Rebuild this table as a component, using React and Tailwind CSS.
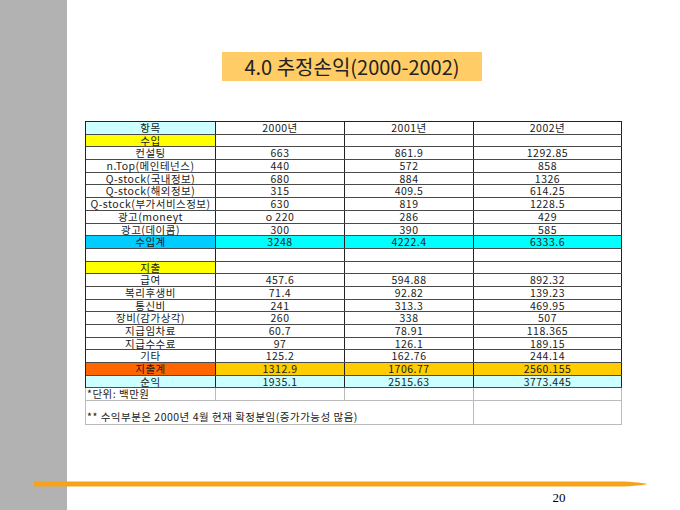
import React from 'react';

const income = [
  ['컨설팅', '663', '861.9', '1292.85'],
  ['n.Top(메인테넌스)', '440', '572', '858'],
  ['Q-stock(국내정보)', '680', '884', '1326'],
  ['Q-stock(해외정보)', '315', '409.5', '614.25'],
  ['Q-stock(부가서비스정보)', '630', '819', '1228.5'],
  ['광고(moneyt', 'o 220', '286', '429'],
  ['광고(데이콤)', '300', '390', '585'],
];

const expense = [
  ['급여', '457.6', '594.88', '892.32'],
  ['복리후생비', '71.4', '92.82', '139.23'],
  ['통신비', '241', '313.3', '469.95'],
  ['장비(감가상각)', '260', '338', '507'],
  ['지급임차료', '60.7', '78.91', '118.365'],
  ['지급수수료', '97', '126.1', '189.15'],
  ['기타', '125.2', '162.76', '244.14'],
];

// 한 줄 = 4칸
const Row = ({ cells, first = 'bg-white', rest = 'bg-white' }) => (
  <div className="grid grid-cols-[130px_129px_129px_148px] grid-rows-[11.7px] h-[12.7px] border-b border-[#4a4a4a]">
    {cells.map((t, i) => (
      <div
        key={i}
        className={`flex items-center justify-center border-r border-[#222] leading-[11.7px] whitespace-nowrap ${i === 0 ? first : rest}`}
      >
        {t}
      </div>
    ))}
  </div>
);

const App = () => {
  return (
    <div
      className="relative flex w-[680px] h-[510px] bg-white overflow-hidden text-[#1a1a1a]"
      style={{ fontFamily: '"Noto Sans CJK KR", "Noto Sans", sans-serif' }}
    >
      {/* 왼쪽 회색 바 */}
      <div className="w-[67px] shrink-0 bg-[#b2b2b2]" />

      <div className="flex-1 flex flex-col">
        {/* 제목 */}
        <div className="mt-[52px] ml-[155px] w-[260px] h-[29px] bg-[#ffcc66] flex items-center justify-center text-[20px] leading-none text-[#222]">
          4.0 추정손익(2000-2002)
        </div>

        {/* 표 */}
        <div className="mt-[40px] ml-[18px] w-[537px] border-l border-t border-[#222] text-[10.5px] tracking-[0.5px]">
          <Row cells={['항목', '2000년', '2001년', '2002년']} first="bg-[#ccffff]" />
          <Row cells={['수입', '', '', '']} first="bg-[#ffff00]" />
          {income.map((r) => (
            <Row key={r[0]} cells={r} />
          ))}
          <Row cells={['수입계', '3248', '4222.4', '6333.6']} first="bg-[#00ccff]" rest="bg-[#00ffff]" />
          <Row cells={['', '', '', '']} />
          <Row cells={['지출', '', '', '']} first="bg-[#ffff00]" />
          {expense.map((r) => (
            <Row key={r[0]} cells={r} />
          ))}
          <Row cells={['지출계', '1312.9', '1706.77', '2560.155']} first="bg-[#ff6600]" rest="bg-[#ffcc00]" />
          <Row cells={['순익', '1935.1', '2515.63', '3773.445']} first="bg-[#ccffff]" rest="bg-[#ccffff]" />

          {/* 하단 주석 */}
          <div className="grid grid-cols-[130px_129px_129px_148px] grid-rows-[11.7px] h-[12.7px] border-b border-[#bbb] -ml-px border-l">
            <div className="flex items-center pl-[1px] border-r border-[#bbb] leading-[11.7px] whitespace-nowrap">*단위: 백만원</div>
            <div className="border-r border-[#bbb]" />
            <div className="border-r border-[#bbb]" />
            <div className="border-r border-[#bbb]" />
          </div>
          <div className="grid grid-cols-[388px_148px] h-[24px] border-b border-[#bbb] -ml-px border-l">
            <div className="flex items-end pl-[1px] pb-[1px] border-r border-[#bbb] leading-[12px] whitespace-nowrap">
              ** 수익부분은 2000년 4월 현재 확정분임(증가가능성 많음)
            </div>
            <div className="border-r border-[#bbb]" />
          </div>
        </div>

        {/* 쪽 번호 */}
        <div
          className="mt-auto mb-[4px] ml-[477px] w-[30px] text-center text-[13px] leading-[16px] text-black"
          style={{ fontFamily: '"Liberation Serif", serif' }}
        >
          20
        </div>
      </div>

      {/* 주황색 선 */}
      <svg className="absolute left-[34px] top-[481px]" width="613" height="6" viewBox="0 0 613 6">
        <path d="M0 0.5 L590 0.5 Q613 2 613 3 Q613 4 590 5.5 L0 5.5 Z" fill="#f7a21b" />
      </svg>
    </div>
  );
};

export default App;
